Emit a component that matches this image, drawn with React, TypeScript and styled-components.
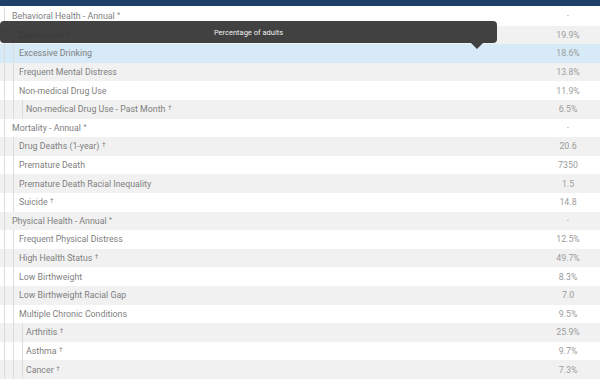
import React from "react";
import styled, { createGlobalStyle } from "styled-components";

const Global = createGlobalStyle`
  html, body { margin: 0; padding: 0; background: #fff; }
  body { font-family: Roboto, "Liberation Sans", sans-serif; }
`;

const Page = styled.div`
  position: relative;
  width: 600px;
  height: 380px;
  overflow: hidden;
  background: #fff;
`;

const TopBar = styled.div`
  height: 6px;
  background: #213f6b;
  margin-bottom: 1px;
`;

const Table = styled.div`
  display: flex;
  flex-direction: column;
`;

const Row = styled.div<{ $bg: string }>`
  display: flex;
  align-items: stretch;
  height: 18.6px;
  flex: 0 0 18.6px;
  background: ${(p) => p.$bg};
`;

const Guide = styled.span<{ $w: number }>`
  flex: 0 0 ${(p) => p.$w}px;
  box-sizing: border-box;
  border-right: 1px solid #dcdcdc;
`;

const Label = styled.div<{ $pad: number }>`
  flex: 1;
  display: flex;
  align-items: center;
  padding-left: ${(p) => p.$pad}px;
  font-size: 8.8px;
  color: #7f7f7f;
  white-space: nowrap;
`;

const Mark = styled.span`
  font-size: 6.5px;
  margin-left: 2.5px;
  position: relative;
  top: -1px;
`;

const Value = styled.div<{ $empty: boolean }>`
  flex: 0 0 64px;
  display: flex;
  align-items: center;
  justify-content: center;
  font-size: 8.8px;
  color: ${(p) => (p.$empty ? "#666" : "#9c9c9c")};
`;

const Tooltip = styled.div`
  position: absolute;
  left: 0;
  top: 21px;
  width: 497px;
  height: 22px;
  box-sizing: border-box;
  background: rgba(50, 50, 50, 0.92);
  border-radius: 4px;
  color: #f2f2f2;
  font-size: 7.5px;
  display: flex;
  align-items: center;
  justify-content: center;
  &::after {
    content: "";
    position: absolute;
    left: 471px;
    bottom: -6px;
    border-left: 6px solid transparent;
    border-right: 6px solid transparent;
    border-top: 6px solid rgba(50, 50, 50, 0.92);
  }
`;

type Item = { label: string; level: number; value: string; mark?: "*" | "†" };

const rows: Item[] = [
  { label: "Behavioral Health - Annual", level: 1, value: "·", mark: "*" },
  { label: "Depression", level: 2, value: "19.9%", mark: "†" },
  { label: "Excessive Drinking", level: 2, value: "18.6%" },
  { label: "Frequent Mental Distress", level: 2, value: "13.8%" },
  { label: "Non-medical Drug Use", level: 2, value: "11.9%" },
  { label: "Non-medical Drug Use - Past Month", level: 3, value: "6.5%", mark: "†" },
  { label: "Mortality - Annual", level: 1, value: "·", mark: "*" },
  { label: "Drug Deaths (1-year)", level: 2, value: "20.6", mark: "†" },
  { label: "Premature Death", level: 2, value: "7350" },
  { label: "Premature Death Racial Inequality", level: 2, value: "1.5" },
  { label: "Suicide", level: 2, value: "14.8", mark: "†" },
  { label: "Physical Health - Annual", level: 1, value: "·", mark: "*" },
  { label: "Frequent Physical Distress", level: 2, value: "12.5%" },
  { label: "High Health Status", level: 2, value: "49.7%", mark: "†" },
  { label: "Low Birthweight", level: 2, value: "8.3%" },
  { label: "Low Birthweight Racial Gap", level: 2, value: "7.0" },
  { label: "Multiple Chronic Conditions", level: 2, value: "9.5%" },
  { label: "Arthritis", level: 3, value: "25.9%", mark: "†" },
  { label: "Asthma", level: 3, value: "9.7%", mark: "†" },
  { label: "Cancer", level: 3, value: "7.3%", mark: "†" },
];

const guideWidths = [5, 9, 9];
const pads = [7, 5, 3];

export default function App() {
  return (
    <Page>
      <Global />
      <TopBar />
      <Table>
        {rows.map((r, i) => {
          const bg = i === 2 ? "#d6eaf7" : i % 2 === 1 ? "#f1f1f1" : "#ffffff";
          return (
            <Row key={i} $bg={bg}>
              {guideWidths.slice(0, r.level).map((w, g) => (
                <Guide key={g} $w={w} />
              ))}
              <Label $pad={pads[r.level - 1]}>
                {r.label}
                {r.mark && <Mark>{r.mark}</Mark>}
              </Label>
              <Value $empty={r.value === "·"}>{r.value}</Value>
            </Row>
          );
        })}
      </Table>
      <Tooltip>Percentage of adults</Tooltip>
    </Page>
  );
}
